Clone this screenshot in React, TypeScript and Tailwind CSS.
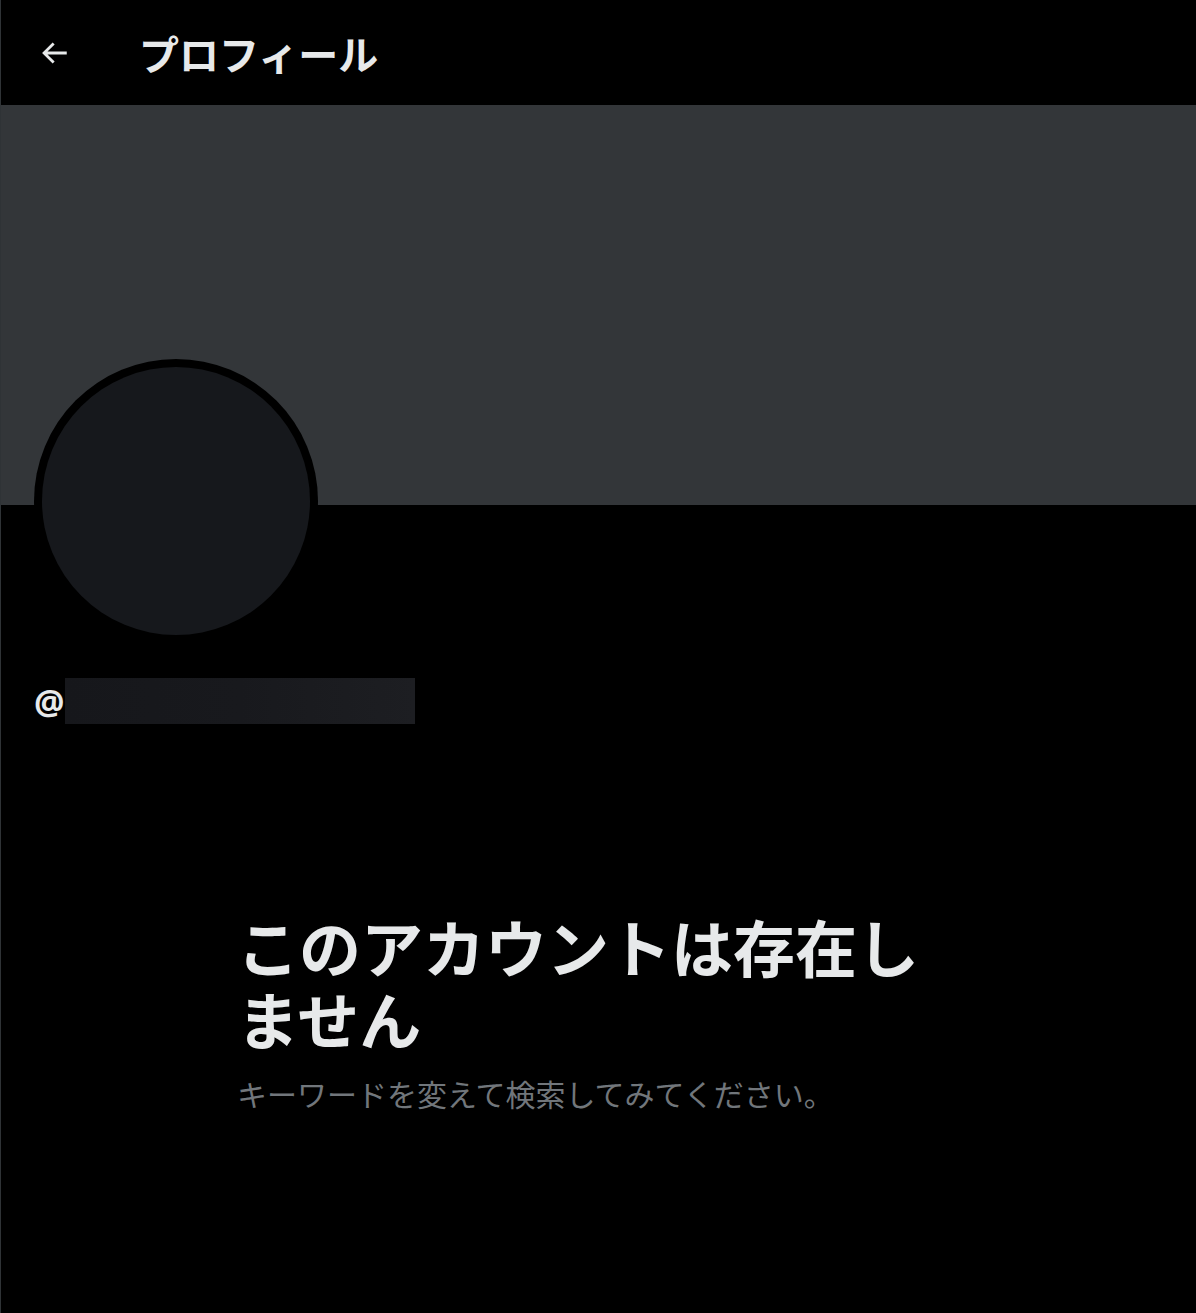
import { useState } from "react";

function BackArrow() {
    return (
        <svg viewBox="0 0 24 24" className="w-[34px] h-[34px] fill-[#e7e9ea]">
            <path d="M7.414 13l5.043 5.04-1.414 1.42L3.586 12l7.457-7.46 1.414 1.42L7.414 11H21v2H7.414z" />
        </svg>
    );
}

export default function App() {
    const [handle] = useState("");

    return (
        <div
            className="w-[1196px] min-h-[1313px] bg-black border-l border-[#2f3336] text-[#e7e9ea] overflow-hidden"
            style={{ fontFamily: '"Noto Sans", "Noto Sans CJK JP", sans-serif' }}
        >
            {/* header */}
            <div className="h-[105px] flex items-center">
                <button className="ml-[36px] w-[34px] h-[34px] flex items-center justify-center">
                    <BackArrow />
                </button>
                <h1 className="ml-[68px] mt-[4px] text-[40px] font-bold leading-none">
                    プロフィール
                </h1>
            </div>

            {/* banner */}
            <div className="h-[400px] bg-[#333639]" />

            {/* avatar */}
            <div className="ml-[33px] -mt-[146px] w-[284px] h-[284px] rounded-full bg-black p-[8px] relative">
                <div className="w-full h-full rounded-full bg-[#16181c]" />
            </div>

            {/* handle */}
            <div className="mt-[35px] ml-[33px] flex items-center h-[46px]">
                <span className="text-[34px] font-bold leading-none" style={{ fontFamily: '"Open Sans", sans-serif' }}>@</span>
                <span className="w-[350px] h-[46px] bg-gradient-to-r from-[#16171b] via-[#18191d] to-[#1d1e22]">{handle}</span>
            </div>

            {/* empty state */}
            <div className="mt-[189px] ml-[236px] w-[710px] flex flex-col">
                <h2 className="text-[62px] font-bold leading-[72px]">
                    このアカウントは存在しません
                </h2>
                <p className="mt-[18px] text-[30px] leading-[40px] text-[#71767b]">
                    キーワードを変えて検索してみてください。
                </p>
            </div>
        </div>
    );
}
